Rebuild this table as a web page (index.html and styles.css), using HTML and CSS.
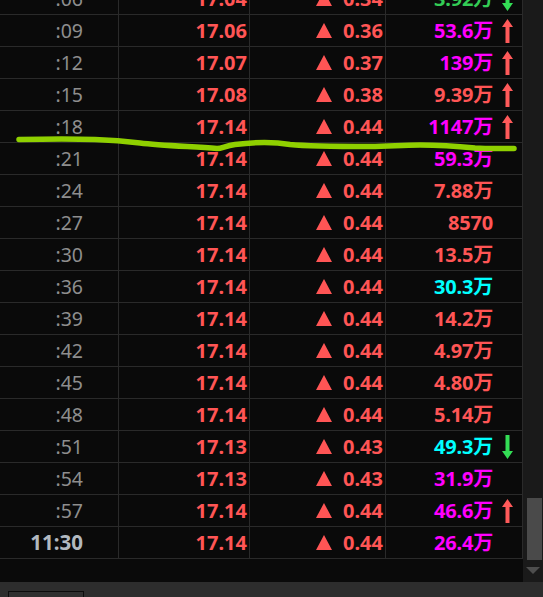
FILE: index.html
```html
<!DOCTYPE html>
<html>
<head>
<meta charset="utf-8">
<link rel="stylesheet" href="styles.css">
</head>
<body>
<div class="app">
  <div class="main">
    <div class="viewport">
      <div class="list">
        <div class="row"><div class="c t">:06</div><div class="c p">17.04</div><div class="c d"><svg class="tri" viewBox="0 0 16 15"><polygon points="0,15 8,0 16,15"/></svg>0.34</div><div class="c v"><span class="green">3.92万</span><svg class="arr dn" viewBox="0 0 11 24"><polygon points="3.5,0 7.5,0 7.5,16 11,16 5.5,24 0,16 3.5,16"/></svg></div></div>
        <div class="row"><div class="c t">:09</div><div class="c p">17.06</div><div class="c d"><svg class="tri" viewBox="0 0 16 15"><polygon points="0,15 8,0 16,15"/></svg>0.36</div><div class="c v"><span class="mag">53.6万</span><svg class="arr up" viewBox="0 0 11 24"><polygon points="5.5,0 11,8 7.5,8 7.5,24 3.5,24 3.5,8 0,8"/></svg></div></div>
        <div class="row"><div class="c t">:12</div><div class="c p">17.07</div><div class="c d"><svg class="tri" viewBox="0 0 16 15"><polygon points="0,15 8,0 16,15"/></svg>0.37</div><div class="c v"><span class="mag">139万</span><svg class="arr up" viewBox="0 0 11 24"><polygon points="5.5,0 11,8 7.5,8 7.5,24 3.5,24 3.5,8 0,8"/></svg></div></div>
        <div class="row"><div class="c t">:15</div><div class="c p">17.08</div><div class="c d"><svg class="tri" viewBox="0 0 16 15"><polygon points="0,15 8,0 16,15"/></svg>0.38</div><div class="c v"><span class="red">9.39万</span><svg class="arr up" viewBox="0 0 11 24"><polygon points="5.5,0 11,8 7.5,8 7.5,24 3.5,24 3.5,8 0,8"/></svg></div></div>
        <div class="row"><div class="c t">:18</div><div class="c p">17.14</div><div class="c d"><svg class="tri" viewBox="0 0 16 15"><polygon points="0,15 8,0 16,15"/></svg>0.44</div><div class="c v"><span class="mag">1147万</span><svg class="arr up" viewBox="0 0 11 24"><polygon points="5.5,0 11,8 7.5,8 7.5,24 3.5,24 3.5,8 0,8"/></svg></div></div>
        <div class="row"><div class="c t">:21</div><div class="c p">17.14</div><div class="c d"><svg class="tri" viewBox="0 0 16 15"><polygon points="0,15 8,0 16,15"/></svg>0.44</div><div class="c v"><span class="mag">59.3万</span><span class="slot"></span></div></div>
        <div class="row"><div class="c t">:24</div><div class="c p">17.14</div><div class="c d"><svg class="tri" viewBox="0 0 16 15"><polygon points="0,15 8,0 16,15"/></svg>0.44</div><div class="c v"><span class="red">7.88万</span><span class="slot"></span></div></div>
        <div class="row"><div class="c t">:27</div><div class="c p">17.14</div><div class="c d"><svg class="tri" viewBox="0 0 16 15"><polygon points="0,15 8,0 16,15"/></svg>0.44</div><div class="c v"><span class="red">8570</span><span class="slot"></span></div></div>
        <div class="row"><div class="c t">:30</div><div class="c p">17.14</div><div class="c d"><svg class="tri" viewBox="0 0 16 15"><polygon points="0,15 8,0 16,15"/></svg>0.44</div><div class="c v"><span class="red">13.5万</span><span class="slot"></span></div></div>
        <div class="row"><div class="c t">:36</div><div class="c p">17.14</div><div class="c d"><svg class="tri" viewBox="0 0 16 15"><polygon points="0,15 8,0 16,15"/></svg>0.44</div><div class="c v"><span class="cyan">30.3万</span><span class="slot"></span></div></div>
        <div class="row"><div class="c t">:39</div><div class="c p">17.14</div><div class="c d"><svg class="tri" viewBox="0 0 16 15"><polygon points="0,15 8,0 16,15"/></svg>0.44</div><div class="c v"><span class="red">14.2万</span><span class="slot"></span></div></div>
        <div class="row"><div class="c t">:42</div><div class="c p">17.14</div><div class="c d"><svg class="tri" viewBox="0 0 16 15"><polygon points="0,15 8,0 16,15"/></svg>0.44</div><div class="c v"><span class="red">4.97万</span><span class="slot"></span></div></div>
        <div class="row"><div class="c t">:45</div><div class="c p">17.14</div><div class="c d"><svg class="tri" viewBox="0 0 16 15"><polygon points="0,15 8,0 16,15"/></svg>0.44</div><div class="c v"><span class="red">4.80万</span><span class="slot"></span></div></div>
        <div class="row"><div class="c t">:48</div><div class="c p">17.14</div><div class="c d"><svg class="tri" viewBox="0 0 16 15"><polygon points="0,15 8,0 16,15"/></svg>0.44</div><div class="c v"><span class="red">5.14万</span><span class="slot"></span></div></div>
        <div class="row"><div class="c t">:51</div><div class="c p">17.13</div><div class="c d"><svg class="tri" viewBox="0 0 16 15"><polygon points="0,15 8,0 16,15"/></svg>0.43</div><div class="c v"><span class="cyan">49.3万</span><svg class="arr dn" viewBox="0 0 11 24"><polygon points="3.5,0 7.5,0 7.5,16 11,16 5.5,24 0,16 3.5,16"/></svg></div></div>
        <div class="row"><div class="c t">:54</div><div class="c p">17.13</div><div class="c d"><svg class="tri" viewBox="0 0 16 15"><polygon points="0,15 8,0 16,15"/></svg>0.43</div><div class="c v"><span class="mag">31.9万</span><span class="slot"></span></div></div>
        <div class="row"><div class="c t">:57</div><div class="c p">17.14</div><div class="c d"><svg class="tri" viewBox="0 0 16 15"><polygon points="0,15 8,0 16,15"/></svg>0.44</div><div class="c v"><span class="mag">46.6万</span><svg class="arr up" viewBox="0 0 11 24"><polygon points="5.5,0 11,8 7.5,8 7.5,24 3.5,24 3.5,8 0,8"/></svg></div></div>
        <div class="row"><div class="c t strong">11:30</div><div class="c p">17.14</div><div class="c d"><svg class="tri" viewBox="0 0 16 15"><polygon points="0,15 8,0 16,15"/></svg>0.44</div><div class="c v"><span class="mag">26.4万</span><span class="slot"></span></div></div>
      </div>
    </div>
    <div class="scrollbar">
      <div class="track"></div>
      <div class="thumb"></div>
      <svg class="sb-arrow" viewBox="0 0 14 7"><polygon points="0,0 14,0 7,7"/></svg>
    </div>
    <svg class="mark" viewBox="0 0 543 597" preserveAspectRatio="none">
      <path d="M19,139.5 C40,139 70,138.5 95,139.5 C115,140 125,141 140,143 C160,145.5 190,146.5 217,148.5 C222,148.5 225,146 235,144.5 C255,142 275,142 290,144.5 C310,146.5 340,146.5 370,146.5 C390,146.5 400,145 420,145 C440,145 455,146 475,148 C490,149 500,148.5 514,148.5"/>
    </svg>
  </div>
  <div class="footer"><div class="tab"></div></div>
</div>
</body>
</html>
```

FILE: styles.css
```css
* { box-sizing: border-box; }
html, body { margin: 0; padding: 0; }
body {
  width: 543px;
  height: 597px;
  overflow: hidden;
  background: #0a0a0a;
  font-family: "Noto Sans", "Noto Sans CJK SC", sans-serif;
}
.app { display: flex; flex-direction: column; width: 543px; height: 597px; }
.main { position: relative; display: flex; height: 582px; }
.viewport { width: 523px; height: 582px; overflow: hidden; }
.list { margin-top: -17px; }
.row {
  display: grid;
  grid-template-columns: 119px 131px 136px 137px;
  height: 32px;
}
.c {
  display: flex;
  align-items: center;
  justify-content: flex-end;
  border-right: 1px solid #2a2a2a;
  border-bottom: 1px solid #2a2a2a;
  font-size: 20px;
  line-height: 1;
  white-space: nowrap;
}
.t { color: #8e8e8e; padding-right: 35px; font-size: 19.5px; }
.t.strong { color: #b2b9c0; font-weight: 700; font-size: 20.5px; }
.p { color: #ff5555; font-weight: 700; padding-right: 2px; }
.d { color: #ff5555; font-weight: 700; padding-right: 2px; }
.tri { width: 16px; height: 15px; margin-right: 11px; fill: #ff5555; margin-top: -1px; }
.v { font-weight: 700; padding-right: 9px; }
.v span { letter-spacing: -0.2px; }
.red { color: #ff5555; }
.mag { color: #ff00ff; }
.cyan { color: #00ffff; }
.green { color: #33cc55; }
.arr { width: 11px; height: 24px; margin-left: 9px; }
.arr.up { fill: #ff5a5a; }
.arr.dn { fill: #33dd55; }
.slot { display: inline-block; width: 11px; margin-left: 9px; }
.scrollbar {
  position: relative;
  width: 20px;
  height: 582px;
  background: #1a1a1a;
  display: flex;
  flex-direction: column;
  align-items: center;
}
.track { flex: 1; }
.thumb {
  width: 15px;
  height: 62px;
  background: #4a4a4a;
  margin-left: 4px;
  align-self: flex-start;
}
.sb-arrow { width: 14px; height: 7px; fill: #4e4e4e; margin: 7px 0 8px 3px; align-self: flex-start; }
.mark {
  position: absolute;
  left: 0; top: 0;
  width: 543px; height: 597px;
  pointer-events: none;
  overflow: visible;
}
.mark path {
  fill: none;
  stroke: #8fd000;
  stroke-width: 5.5;
  stroke-linecap: round;
  stroke-linejoin: round;
}
.footer {
  height: 15px;
  background: #2d2d2d;
  padding-left: 8px;
  padding-top: 9px;
}
.tab {
  width: 76px;
  height: 10px;
  border: 1px solid #0c0c0c;
  border-bottom: none;
  background: #303030;
}
```
